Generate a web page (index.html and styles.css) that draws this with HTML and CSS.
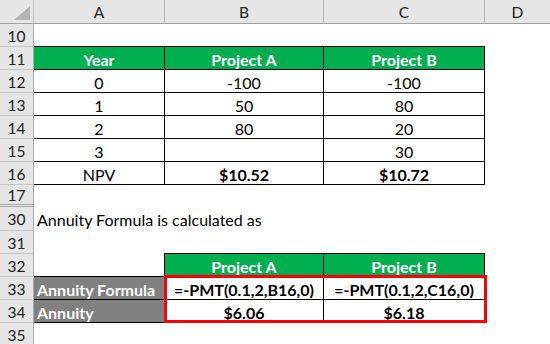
FILE: index.html
```html
<!DOCTYPE html>
<html>
<head>
<meta charset="utf-8">
<link rel="stylesheet" href="styles.css">
</head>
<body>
<div class="sheet">
  <div class="row hdr">
    <div class="corner"><svg class="tri" width="16" height="14" viewBox="0 0 16 14"><polygon points="16,0 16,14 0,14" fill="#b4b4b4"/></svg></div>
    <div class="ch">A</div>
    <div class="ch">B</div>
    <div class="ch">C</div>
    <div class="ch last">D</div>
  </div>
  <div class="row r10">
    <div class="rh first">10</div>
    <div class="c"></div><div class="c"></div><div class="c"></div><div class="c"></div>
  </div>
  <div class="row">
    <div class="rh">11</div>
    <div class="c t g">Year</div><div class="c t g">Project A</div><div class="c t g">Project B</div><div class="c"></div>
  </div>
  <div class="row">
    <div class="rh">12</div>
    <div class="c t">0</div><div class="c t">-100</div><div class="c t">-100</div><div class="c"></div>
  </div>
  <div class="row">
    <div class="rh">13</div>
    <div class="c t">1</div><div class="c t">50</div><div class="c t">80</div><div class="c"></div>
  </div>
  <div class="row">
    <div class="rh">14</div>
    <div class="c t">2</div><div class="c t">80</div><div class="c t">20</div><div class="c"></div>
  </div>
  <div class="row">
    <div class="rh">15</div>
    <div class="c t">3</div><div class="c t"></div><div class="c t">30</div><div class="c"></div>
  </div>
  <div class="row">
    <div class="rh">16</div>
    <div class="c t end">NPV</div><div class="c t end b">$10.52</div><div class="c t end b">$10.72</div><div class="c"></div>
  </div>
  <div class="row">
    <div class="rh hidden-after">17</div>
    <div class="c"></div><div class="c"></div><div class="c"></div><div class="c"></div>
  </div>
  <div class="row">
    <div class="rh after-hidden">30</div>
    <div class="c text">Annuity Formula is calculated as</div><div class="c"></div><div class="c"></div><div class="c"></div>
  </div>
  <div class="row">
    <div class="rh">31</div>
    <div class="c"></div><div class="c"></div><div class="c"></div><div class="c"></div>
  </div>
  <div class="row">
    <div class="rh">32</div>
    <div class="c edge"></div><div class="c t g">Project A</div><div class="c t g">Project B</div><div class="c"></div>
  </div>
  <div class="row">
    <div class="rh">33</div>
    <div class="c t lab">Annuity Formula</div><div class="c t b">=-PMT(0.1,2,B16,0)</div><div class="c t b">=-PMT(0.1,2,C16,0)</div><div class="c"></div>
  </div>
  <div class="row">
    <div class="rh">34</div>
    <div class="c t lab end">Annuity</div><div class="c t b end">$6.06</div><div class="c t b end">$6.18</div><div class="c"></div>
  </div>
  <div class="row">
    <div class="rh">35</div>
    <div class="c"></div><div class="c"></div><div class="c"></div><div class="c"></div>
  </div>
  <div class="redbox"></div>
</div>
</body>
</html>
```

FILE: styles.css
```css
* { box-sizing: border-box; }
html, body { margin: 0; padding: 0; background: #fff; }
body {
  font-family: "Lato", "Liberation Sans", sans-serif;
  font-size: 16px;
  color: #000;
  width: 550px;
  height: 344px;
  overflow: hidden;
}
.sheet {
  position: relative;
  width: 550px;
}
.row {
  display: grid;
  grid-template-columns: 34px 131px 159px 161px 65px;
  height: 23px;
}
.row.hdr {
  height: 24px;
  background: #e6e6e6;
  border-bottom: 1px solid #a0a0a0;
}
.row.r10 { height: 22px; }
.corner {
  position: relative;
  border-right: 1px solid #c0c0c0;
  display: flex;
  align-items: flex-end;
  justify-content: flex-end;
  padding: 0 3px 3px 0;
}
.ch {
  display: flex;
  align-items: center;
  justify-content: center;
  border-right: 1px solid #b4b4b4;
  color: #222;
  font-size: 15.5px;
  padding-top: 1px;
}
.ch.last { border-right: none; }
.rh {
  background: #e6e6e6;
  border-right: 1px solid #a8a8a8;
  border-top: 1px solid #c4c4c4;
  color: #222;
  font-size: 15.5px;
  display: flex;
  align-items: center;
  justify-content: center;
  padding-top: 1px;
}
.rh.first { border-top: none; }
.rh.hidden-after {
  border-bottom: 3px double #a8a8a8;
}
.rh.after-hidden { border-top: none; }
.c {
  display: flex;
  align-items: center;
  justify-content: center;
  white-space: nowrap;
  padding-top: 2px;
}
.c.t {
  border-top: 1px solid #000;
  border-right: 1px solid #000;
}
.c.end { box-shadow: 0 1px 0 #000; }
.c.edge { border-right: 1px solid #000; }
.c.g {
  background: #00b050;
  color: #fff;
  font-weight: bold;
}
.c.b { font-weight: bold; }
.c.lab {
  background: #808080;
  color: #fff;
  font-weight: bold;
  justify-content: flex-start;
  padding-left: 3px;
}
.c.text {
  justify-content: flex-start;
  padding-left: 3px;
  overflow: visible;
}
.redbox {
  position: absolute;
  left: 164px;
  top: 275px;
  width: 323px;
  height: 48px;
  border: 3px solid #ff0000;
  pointer-events: none;
}
```
